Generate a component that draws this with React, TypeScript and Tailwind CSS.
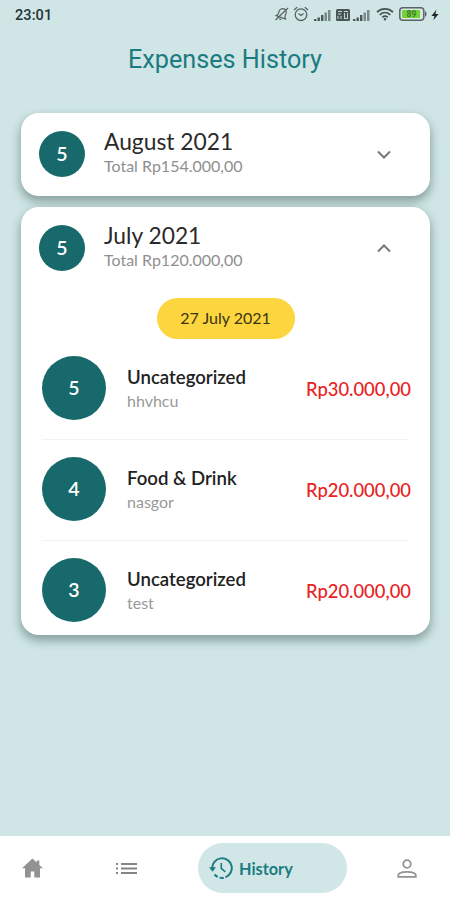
import { useState } from 'react'

type Expense = {
  id: number
  day: string
  category: string
  note: string
  amount: string
}

type Month = {
  name: string
  count: number
  total: string
  date?: string
  items: Expense[]
}

const MONTHS: Month[] = [
  { name: 'August 2021', count: 5, total: 'Rp154.000,00', items: [] },
  {
    name: 'July 2021',
    count: 5,
    total: 'Rp120.000,00',
    date: '27 July 2021',
    items: [
      { id: 1, day: '5', category: 'Uncategorized', note: 'hhvhcu', amount: 'Rp30.000,00' },
      { id: 2, day: '4', category: 'Food & Drink', note: 'nasgor', amount: 'Rp20.000,00' },
      { id: 3, day: '3', category: 'Uncategorized', note: 'test', amount: 'Rp20.000,00' },
    ],
  },
]

function Signal() {
  return (
    <svg className="w-[17px] h-3" viewBox="0 0 17 12">
      <path fill="#4a5555" d="M0 10h2.4v2H0zM3.5 8.5h2.4V12H3.5zM7 6h2.4v6H7z" />
      <path fill="#7b8888" d="M10.5 3.5h2.5V12h-2.5zM14 1h2.5v11H14z" />
    </svg>
  )
}

function StatusBar() {
  return (
    <div className="h-[29px] flex items-center justify-between pl-[15px] pr-[10px]">
      <span className="pt-[3px] font-['Roboto',sans-serif] font-medium text-[14.5px] leading-none text-[#263333] tracking-[0.1px]">
        23:01
      </span>
      <div className="flex items-center">
        {/* Muted bell */}
        <svg className="w-4 h-4 -mt-px" viewBox="0 0 16 16" fill="none" stroke="#566161" strokeWidth="1.2">
          <g transform="rotate(20 8 8)">
            <path d="M3 11.5h10l-1.4-2V6.2a3.6 3.6 0 0 0-7.2 0v3.3zM6.8 13.5h2.4" />
          </g>
          <path d="M1.5 14L14 2" />
        </svg>
        {/* Alarm */}
        <svg className="w-4 h-4 ml-[3px] -mt-px" viewBox="0 0 16 16" fill="none" stroke="#566161" strokeWidth="1.3">
          <circle cx="8" cy="8.7" r="5.8" />
          <path d="M1 4L4.2 1.3M15 4l-3.2-2.7M5.5 7.5L8 9.5l2.5-2" />
        </svg>
        <span className="ml-[5px] flex">
          <Signal />
        </span>
        {/* Carrier badge */}
        <svg className="w-[14px] h-3 ml-[5px]" viewBox="0 0 14 12">
          <rect width="14" height="12" rx="1.5" fill="#4a5656" />
          <path stroke="#c2d3d3" strokeWidth="1" fill="none" d="M2 2.5h4M2 5h3M8 2.5h4M8.5 4v5M11.5 4v5M2 7v3M5 7v3M8 9.5h4" />
        </svg>
        <span className="ml-[3px] flex">
          <Signal />
        </span>
        {/* Wi-Fi */}
        <svg className="w-[18px] h-[14px] ml-[6px] -mt-px" viewBox="0 0 18 14" fill="none" stroke="#465252" strokeWidth="1.7">
          <path d="M1 5c4.8-4.3 11.2-4.3 16 0M3.7 7.8c3.2-2.9 7.4-2.9 10.6 0M6.3 10.3c1.7-1.4 3.7-1.4 5.4 0" />
          <circle cx="9" cy="12.2" r="1.2" fill="#465252" stroke="none" />
        </svg>
        {/* Battery */}
        <svg className="w-[28px] h-[14px] ml-[5px] -mt-px" viewBox="0 0 28 14">
          <rect x="0.8" y="0.8" width="24" height="12.4" rx="3" fill="#d6e8df" stroke="#5b6464" strokeWidth="1.5" />
          <path d="M26 4c2 .7 2 5.3 0 6z" fill="#5b6464" />
          <rect x="3" y="3" width="18" height="8" rx="1" fill="#74d13c" />
          <text x="12.5" y="10.2" textAnchor="middle" fontSize="8.5" fontWeight="700" fontFamily="Roboto, sans-serif" fill="#3d7d27">
            89
          </text>
        </svg>
        <svg className="w-2 h-3 ml-1 mr-px" viewBox="0 0 8 12">
          <path d="M5.4 0.8L0.4 7h3L2.4 11.2 7.6 5H4.5z" fill="#202828" />
        </svg>
      </div>
    </div>
  )
}

function Chevron({ open }: { open: boolean }) {
  return (
    <svg className="w-[14px] h-[9px]" viewBox="0 0 14 9" fill="none" stroke="#777" strokeWidth="2">
      <path d={open ? 'M1 7.5l6-6 6 6' : 'M1 1.5l6 6 6-6'} />
    </svg>
  )
}

function ExpenseRow({ item }: { item: Expense }) {
  return (
    <li className="h-[101px] pt-[17px] flex items-start border-b border-[#f3f3f3] last:border-b-0 last:h-[94px]">
      <span className="w-16 h-16 shrink-0 rounded-full bg-[#17696c] text-white font-semibold text-[19.5px] flex items-center justify-center">
        {item.day}
      </span>
      <div className="ml-[21px] pt-[9px] flex-1 min-w-0">
        <p className="font-semibold text-[18.6px] leading-6 text-[#222]">{item.category}</p>
        <p className="text-[16px] leading-6 text-[#999]">{item.note}</p>
      </div>
      <span className="pt-[21px] -mr-[3px] text-[18.4px] leading-6 font-medium text-[#e8231f]">
        {item.amount}
      </span>
    </li>
  )
}

function MonthCard({ month, defaultOpen }: { month: Month; defaultOpen: boolean }) {
  const [open, setOpen] = useState(defaultOpen)

  return (
    <section className="rounded-[18px] bg-white shadow-[0_5px_10px_1px_rgba(60,90,88,0.48)]">
      <button
        type="button"
        onClick={() => setOpen(!open)}
        className="w-full h-[83px] pl-[18px] pr-[39px] flex items-center text-left"
      >
        <span className="w-[46px] h-[46px] -mt-px rounded-full bg-[#17696c] text-white font-semibold text-[19.5px] flex items-center justify-center">
          {month.count}
        </span>
        <span className="ml-[19px] flex-1 flex flex-col pb-[5px]">
          <span className="text-[22.8px] leading-7 text-[#2a2a2a]">{month.name}</span>
          <span className="text-[16px] leading-[22px] text-[#8f8f8f]">Total {month.total}</span>
        </span>
        <Chevron open={open} />
      </button>
      {open && month.items.length > 0 && (
        <div className="pt-2">
          <div className="w-[138px] h-[41px] mx-auto rounded-full bg-[#fdd53f] text-[#3b3416] text-[16px] flex items-center justify-center">
            <span className="pb-[1px]">{month.date}</span>
          </div>
          <ul className="pl-[21px] pr-[22px]">
            {month.items.map((item) => (
              <ExpenseRow key={item.id} item={item} />
            ))}
          </ul>
        </div>
      )}
    </section>
  )
}

function BottomNav() {
  return (
    <nav className="h-16 bg-white flex items-center pl-[22px] pr-[33px]">
      <a aria-label="Home">
        <svg className="w-[21px] h-[20px]" viewBox="0 0 21 20" fill="#929292">
          <path d="M10.5 0.5L0 10.3h3V19.5h5.7v-6h3.6v6H18v-9.2h3L17.3 6.9V2.5h-2.6v2z" />
        </svg>
      </a>
      <a aria-label="List" className="ml-[73px]">
        <svg className="w-[21px] h-[13px]" viewBox="0 0 21 13" fill="#858585">
          <path d="M0 1h2v2H0zM5 1h16v2H5zM0 5.5h2v2H0zM5 5.5h16v2H5zM0 10h2v2H0zM5 10h16v2H5z" />
        </svg>
      </a>
      <a className="ml-[61px] w-[149px] h-[50px] pl-[11px] rounded-full bg-[#d1e6e6] text-[#1b7c82] flex items-center">
        <svg className="w-6 h-6" viewBox="0 0 24 24" fill="none" stroke="currentColor" strokeWidth="2">
          <path d="M3.2 12.5A9.8 9.8 0 1 1 16.5 21.2" />
          <path d="M14.8 21.7a9.8 9.8 0 0 1-4.2-.1M8.7 20.9a9.8 9.8 0 0 1-3.1-2.4" />
          <path d="M0 11.2h7l-3.5 4.6z" fill="currentColor" stroke="none" />
          <path d="M12.3 7v5.3l4 3.5" strokeWidth="1.6" />
        </svg>
        <span className="ml-[6px] pt-[2px] font-bold text-[16.3px]">History</span>
      </a>
      <a aria-label="Profile" className="ml-auto">
        <svg className="w-5 h-5" viewBox="0 0 20 20" fill="none" stroke="#929292" strokeWidth="1.8">
          <circle cx="10" cy="6" r="3.8" />
          <path d="M1.2 18.8v-1.4c0-4.8 17.6-4.8 17.6 0v1.4z" />
        </svg>
      </a>
    </nav>
  )
}

export default function App() {
  return (
    <div className="w-[450px] h-[900px] flex flex-col overflow-hidden bg-[#d0e6e6] font-['Lato',sans-serif]">
      <StatusBar />
      <h1 className="mt-[15px] text-center font-['Roboto',sans-serif] text-[25.2px] leading-8 text-[#1c7b81]">
        Expenses History
      </h1>
      <main className="flex-1 min-h-0 mt-[37px] pl-[21px] pr-5 flex flex-col gap-[11px]">
        {MONTHS.map((month) => (
          <MonthCard key={month.name} month={month} defaultOpen={month.items.length > 0} />
        ))}
      </main>
      <BottomNav />
    </div>
  )
}
